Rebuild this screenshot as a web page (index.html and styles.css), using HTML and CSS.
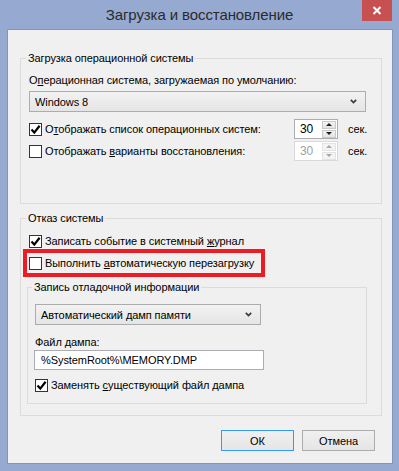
FILE: index.html
```html
<!DOCTYPE html>
<html lang="ru">
<head>
  <meta charset="UTF-8">
  <title>Загрузка и восстановление</title>
  <link rel="stylesheet" href="styles.css">
</head>
<body>
  <div class="window">
    <div class="titlebar">
      <span class="title">Загрузка и восстановление</span>
      <button class="close-btn" aria-label="Закрыть">
        <svg width="10" height="9" viewBox="0 0 10 9"><path d="M1.5 1 L8.5 8 M8.5 1 L1.5 8" stroke="#fff" stroke-width="2"/></svg>
      </button>
    </div>

    <div class="client">
      <fieldset class="group group-boot">
        <legend>Загрузка операционной системы</legend>
        <div class="field-label">О<u>п</u>ерационная система, загружаемая по умолчанию:</div>
        <div class="select select-os">
          <span>Windows 8</span>
          <svg class="chevron" width="7" height="5" viewBox="0 0 7 5"><path d="M0.8 0.8 L3.5 3.6 L6.2 0.8" fill="none" stroke="#3c3c3c" stroke-width="1.7"/></svg>
        </div>

        <div class="row row-spin">
          <span class="check checked"><svg width="11" height="11" viewBox="0 0 11 11"><path d="M1.5 5.5 L4.3 8.6 L9.6 1.8" fill="none" stroke="#000" stroke-width="2.2"/></svg></span>
          <span class="row-label">О<u>т</u>ображать список операционных систем:</span>
          <div class="spin">
            <span class="spin-value">30</span>
            <span class="spin-btns">
              <span class="spin-btn"><i class="arrow-up"></i></span>
              <span class="spin-btn"><i class="arrow-down"></i></span>
            </span>
          </div>
          <span class="unit">сек.</span>
        </div>

        <div class="row row-spin">
          <span class="check"></span>
          <span class="row-label">Отображать <u>в</u>арианты восстановления:</span>
          <div class="spin disabled">
            <span class="spin-value">30</span>
            <span class="spin-btns">
              <span class="spin-btn"><i class="arrow-up"></i></span>
              <span class="spin-btn"><i class="arrow-down"></i></span>
            </span>
          </div>
          <span class="unit">сек.</span>
        </div>
      </fieldset>

      <fieldset class="group group-failure">
        <legend>Отказ системы</legend>
        <div class="row">
          <span class="check checked"><svg width="11" height="11" viewBox="0 0 11 11"><path d="M1.5 5.5 L4.3 8.6 L9.6 1.8" fill="none" stroke="#000" stroke-width="2.2"/></svg></span>
          <span class="row-label">Записать событие в системный <u>ж</u>урнал</span>
        </div>
        <div class="row highlight">
          <span class="check"></span>
          <span class="row-label">Выполнить <u>а</u>втоматическую перезагрузку</span>
        </div>

        <fieldset class="group subgroup">
          <legend>Запись отладочной информации</legend>
          <div class="select select-dump">
            <span>Автоматический дамп памяти</span>
            <svg class="chevron" width="7" height="5" viewBox="0 0 7 5"><path d="M0.8 0.8 L3.5 3.6 L6.2 0.8" fill="none" stroke="#3c3c3c" stroke-width="1.7"/></svg>
          </div>
          <div class="field-label dump-label">Файл дампа:</div>
          <input class="text-input" type="text" value="%SystemRoot%\MEMORY.DMP">
          <div class="row">
            <span class="check checked"><svg width="11" height="11" viewBox="0 0 11 11"><path d="M1.5 5.5 L4.3 8.6 L9.6 1.8" fill="none" stroke="#000" stroke-width="2.2"/></svg></span>
            <span class="row-label">Заменять <u>с</u>уществующий файл дампа</span>
          </div>
        </fieldset>
      </fieldset>

      <div class="buttons">
        <button class="btn btn-default">ОК</button>
        <button class="btn">Отмена</button>
      </div>
    </div>
  </div>
</body>
</html>
```

FILE: styles.css
```css
* {
  box-sizing: border-box;
}

body {
  margin: 0;
  font-family: "Liberation Sans", Arial, sans-serif;
  font-size: 11px;
  letter-spacing: -0.08px;
  color: #000;
}

u {
  text-decoration: underline;
  text-underline-offset: 1px;
}

.window {
  position: relative;
  width: 399px;
  height: 471px;
  background: #96a9d0;
  display: flex;
  flex-direction: column;
}

.titlebar {
  height: 29px;
  display: flex;
  align-items: center;
  justify-content: center;
}

.title {
  font-size: 15px;
  letter-spacing: -0.1px;
  color: #2b2b2b;
}

.close-btn {
  position: absolute;
  top: 0;
  right: 7px;
  width: 30px;
  height: 21px;
  padding: 0;
  border: 0;
  background: #c75050;
  display: flex;
  align-items: center;
  justify-content: center;
}

.client {
  flex: 1;
  margin: 0 6px 7px 7px;
  border: 1px solid #8394bd;
  background: #f0f0f0;
  padding: 20px 10px 0 12px;
  display: flex;
  flex-direction: column;
}

/* group boxes */
.group {
  margin: 0;
  min-width: 0;
  border: 1px solid #dcdcdc;
  padding: 6px 15px 42px 8px;
}

.group legend {
  padding: 0 2px;
  margin-left: -3px;
  line-height: 16px;
}

.group-failure {
  margin-top: 6px;
  padding: 7px 15px 11px 8px;
}

.subgroup {
  margin: 8px -1px 0 -2px;
  padding: 9px 7px 10px 7px;
}

.field-label {
  line-height: 16px;
}

.dump-label {
  margin-top: 10px;
  line-height: 15px;
}

/* combo boxes */
.select {
  height: 21px;
  margin-top: 3px;
  border: 1px solid #acacac;
  background: linear-gradient(#f2f2f2, #e5e5e5);
  display: flex;
  align-items: center;
  justify-content: space-between;
  padding: 0 8px 0 5px;
}

.select-dump {
  width: 226px;
  margin-top: 0;
}

.text-input {
  display: block;
  width: 230px;
  height: 20px;
  margin: 0 0 0 -1px;
  border: 1px solid #abadb3;
  background: #fff;
  padding: 0 6px;
  font: inherit;
  letter-spacing: inherit;
  color: #000;
}

/* checkbox rows */
.row {
  display: flex;
  align-items: center;
  line-height: 16px;
}

.group-failure > .row + .row {
  margin-top: 6px;
}

.subgroup .row {
  margin-top: 7px;
}

.row-spin {
  height: 20px;
  margin-top: 7px;
}

.row-spin + .row-spin {
  margin-top: 2px;
}

.check {
  width: 13px;
  height: 13px;
  flex: none;
  border: 1px solid #333;
  background: #fff;
  margin-right: 3px;
  display: flex;
  align-items: center;
  justify-content: center;
}

.row-label {
  flex: 1;
  white-space: nowrap;
}

.highlight {
  width: fit-content;
  padding-right: 5px;
  outline: 4px solid #ed1c24;
  outline-offset: 2px;
}

/* spin boxes */
.spin {
  width: 44px;
  height: 20px;
  border: 1px solid #abadb3;
  background: #fff;
  display: flex;
  align-items: center;
  justify-content: space-between;
  padding: 0 1px 0 5px;
  font-size: 12px;
}

.spin-btns {
  width: 14px;
  display: flex;
  flex-direction: column;
  gap: 1px;
}

.spin-btn {
  height: 8px;
  background: linear-gradient(#f3f3f3, #e3e3e3);
  border: 1px solid #c9c9c9;
  display: flex;
  align-items: center;
  justify-content: center;
}

.arrow-up,
.arrow-down {
  width: 0;
  height: 0;
  border-left: 3px solid transparent;
  border-right: 3px solid transparent;
}

.arrow-up {
  border-bottom: 3px solid #1e1e1e;
}

.arrow-down {
  border-top: 3px solid #1e1e1e;
}

.spin.disabled {
  border-color: #d9d9d9;
  color: #a0a0a0;
}

.spin.disabled .spin-btn {
  background: #f4f4f4;
  border-color: #e3e3e3;
}

.spin.disabled .arrow-up {
  border-bottom-color: #a8a8a8;
}

.spin.disabled .arrow-down {
  border-top-color: #a8a8a8;
}

.unit {
  width: 18px;
  margin-left: 10px;
  white-space: nowrap;
}

/* dialog buttons */
.buttons {
  display: flex;
  justify-content: flex-end;
  gap: 8px;
  margin: 14px 7px 0 0;
}

.btn {
  width: 73px;
  height: 21px;
  padding: 0;
  border: 1px solid #acacac;
  background: linear-gradient(#f0f0f0, #e5e5e5);
  font: inherit;
  letter-spacing: inherit;
  color: #000;
}

.btn-default {
  border-color: #3399ff;
}
```
